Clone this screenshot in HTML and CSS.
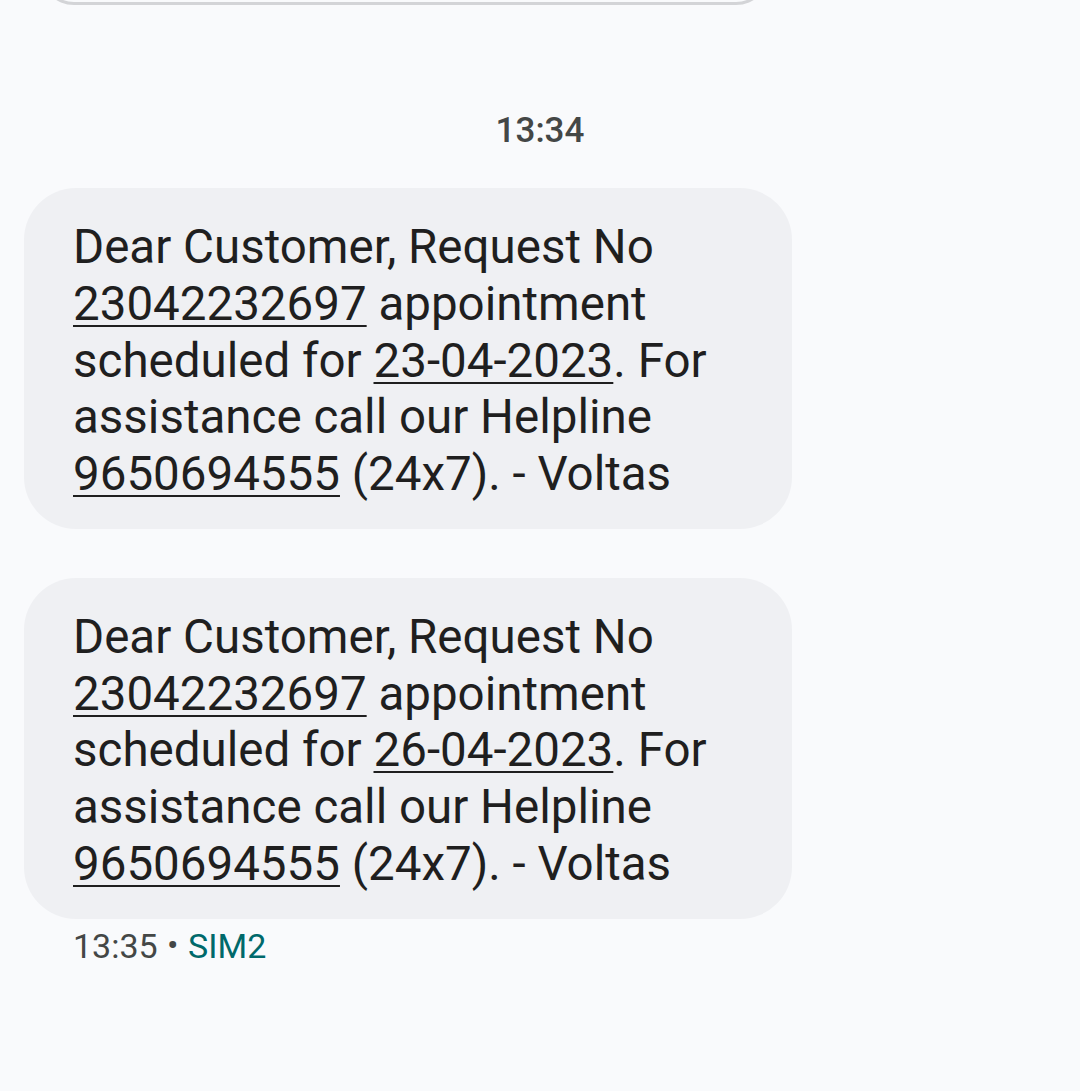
FILE: index.html
```html
<!DOCTYPE html>
<html>
<head>
    <title>Messages</title>
    <link rel="stylesheet" href="styles.css">
</head>
<body>
    <div class="thread">
        <div class="prev-bubble"></div>

        <div class="time-divider">13:34</div>

        <div class="bubble">
            Dear Customer, Request No <a href="#">23042232697</a> appointment scheduled for <a href="#">23-04-2023</a>. For assistance call our Helpline <a href="#">9650694555</a> (24x7). - Voltas
        </div>

        <div class="bubble">
            Dear Customer, Request No <a href="#">23042232697</a> appointment scheduled for <a href="#">26-04-2023</a>. For assistance call our Helpline <a href="#">9650694555</a> (24x7). - Voltas
        </div>

        <div class="meta">13:35 <span class="dot">&bull;</span> <span class="sim">SIM2</span></div>
    </div>
</body>
</html>
```

FILE: styles.css
```css
body {
    margin: 0;
    background-color: #f9fafc;
    font-family: Roboto, "Noto Sans", sans-serif;
    color: #1f1f1f;
}

.thread {
    padding: 0 24px;
    height: 1091px;
    overflow: hidden;
}

.prev-bubble {
    margin: -60px 0 0 16px;
    width: 724px;
    height: 62px;
    border: 3px solid #d3d4d7;
    border-top: none;
    border-radius: 0 0 34px 34px;
}

.time-divider {
    text-align: center;
    font-size: 35px;
    font-weight: 500;
    color: #444746;
    margin-top: 104px;
    line-height: 44px;
}

.bubble {
    box-sizing: border-box;
    width: 768px;
    margin-top: 35px;
    padding: 31px 60px 26px 49px;
    background-color: #eff0f3;
    border-radius: 52px;
    font-size: 47.5px;
    line-height: 56.75px;
}

.bubble + .bubble {
    margin-top: 49px;
}

.bubble a {
    color: inherit;
    text-decoration: underline;
    text-decoration-thickness: 2px;
    text-underline-offset: 5px;
}

.meta {
    margin: 6px 0 0 49px;
    font-size: 34px;
    line-height: 40px;
    color: #444746;
}

.meta .dot {
    font-size: 34px;
    vertical-align: 1px;
    margin: 0 1px;
}

.meta .sim {
    color: #00696b;
}
```
